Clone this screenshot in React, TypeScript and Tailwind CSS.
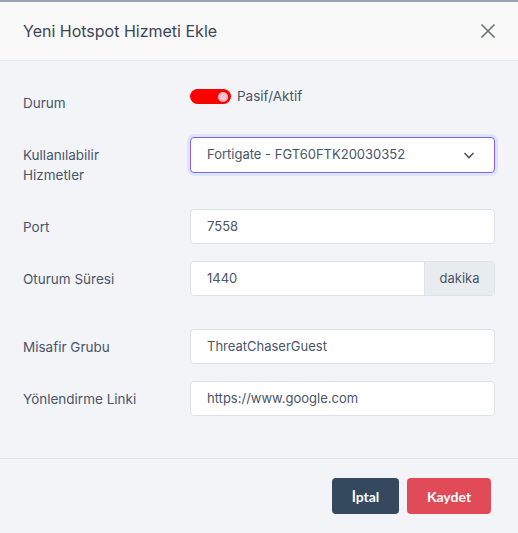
function Label({ children }: { children: React.ReactNode }) {
  return <div className="w-[167px] shrink-0 text-[13.5px] leading-[20px] text-[#4a5568]">{children}</div>;
}

function TextInput({ value }: { value: string }) {
  return (
    <div className="flex h-[35px] flex-1 items-center rounded-[4px] border border-[#dfe1ea] bg-white px-4 text-[13px] text-[#4a5568]">
      {value}
    </div>
  );
}

export default function App() {
  return (
    <div
      className="flex h-[533px] w-[518px] flex-col border-t-2 border-[#9aa3b2] bg-[#f3f4f8]"
      style={{ fontFamily: 'Inter, "Noto Sans", sans-serif' }}
    >
      <div className="flex h-[59px] items-center justify-between border-b border-[#e6e7ec] bg-[#f9f9f9] pl-[23px] pr-[22px]">
        <h1 className="text-[16px] font-normal text-[#3a4556]">Yeni Hotspot Hizmeti Ekle</h1>
        <svg width="16" height="16" viewBox="0 0 16 16" className="text-[#6b6f76]">
          <path d="M1.5 1.5 14.5 14.5 M14.5 1.5 1.5 14.5" stroke="currentColor" strokeWidth="1.6" />
        </svg>
      </div>

      <div className="flex flex-1 flex-col pl-[23px] pr-[23px]">
        <div className="mt-[25px] flex items-start">
          <Label>
            <div className="pt-[7px]">Durum</div>
          </Label>
          <div className="flex items-start gap-[6px]">
            <div className="mt-[3px] flex h-[15px] w-[41px] items-center justify-end rounded-full bg-[#ff0000] pr-[3px]">
              <div className="h-[10px] w-[10px] rounded-full bg-[#ffc0cb]" />
            </div>
            <span className="text-[13.5px] leading-[20px] text-[#4a5568]">Pasif/Aktif</span>
          </div>
        </div>

        <div className="mt-[24px] flex items-start">
          <Label>
            <div className="pt-[8px] leading-[20px]">
              Kullanılabilir
              <br />
              Hizmetler
            </div>
          </Label>
          <div className="flex h-[36px] flex-1 items-center justify-between rounded-[4px] border border-[#8b5cf6] bg-white pl-4 pr-[18px] text-[13px] text-[#4a5568] shadow-[0_0_0_3px_#dbe6fb]">
            <span>Fortigate - FGT60FTK20030352</span>
            <svg width="14" height="14" viewBox="0 0 14 14">
              <path d="M2.5 5 7 9.5 11.5 5" fill="none" stroke="#4a5568" strokeWidth="1.6" />
            </svg>
          </div>
        </div>

        <div className="mt-[24px] flex items-center">
          <Label>Port</Label>
          <TextInput value="7558" />
        </div>

        <div className="mt-[17px] flex items-center">
          <Label>Oturum Süresi</Label>
          <div className="flex h-[35px] flex-1 overflow-hidden rounded-[4px] border border-[#dfe1ea] bg-white text-[13px] text-[#4a5568]">
            <div className="flex flex-1 items-center px-4">1440</div>
            <div className="flex w-[70px] items-center justify-center border-l border-[#dfe1ea] bg-[#e9ecef]">dakika</div>
          </div>
        </div>

        <div className="mt-[33px] flex items-center">
          <Label>Misafir Grubu</Label>
          <TextInput value="ThreatChaserGuest" />
        </div>

        <div className="mt-[17px] flex items-center">
          <Label>Yönlendirme Linki</Label>
          <TextInput value="https://www.google.com" />
        </div>
      </div>

      <div className="flex h-[75px] items-start justify-end gap-2 border-t border-[#dfe1e6] pr-[27px] pt-[19px]">
        <button
          className="h-[36px] w-[67px] rounded-[4px] bg-[#34495e] text-[14px] font-bold text-white"
          style={{ fontFamily: 'Lato, sans-serif' }}
        >
          İptal
        </button>
        <button
          className="h-[36px] w-[84px] rounded-[4px] bg-[#e14b57] text-[14px] font-bold text-white"
          style={{ fontFamily: 'Lato, sans-serif' }}
        >
          Kaydet
        </button>
      </div>
    </div>
  );
}
